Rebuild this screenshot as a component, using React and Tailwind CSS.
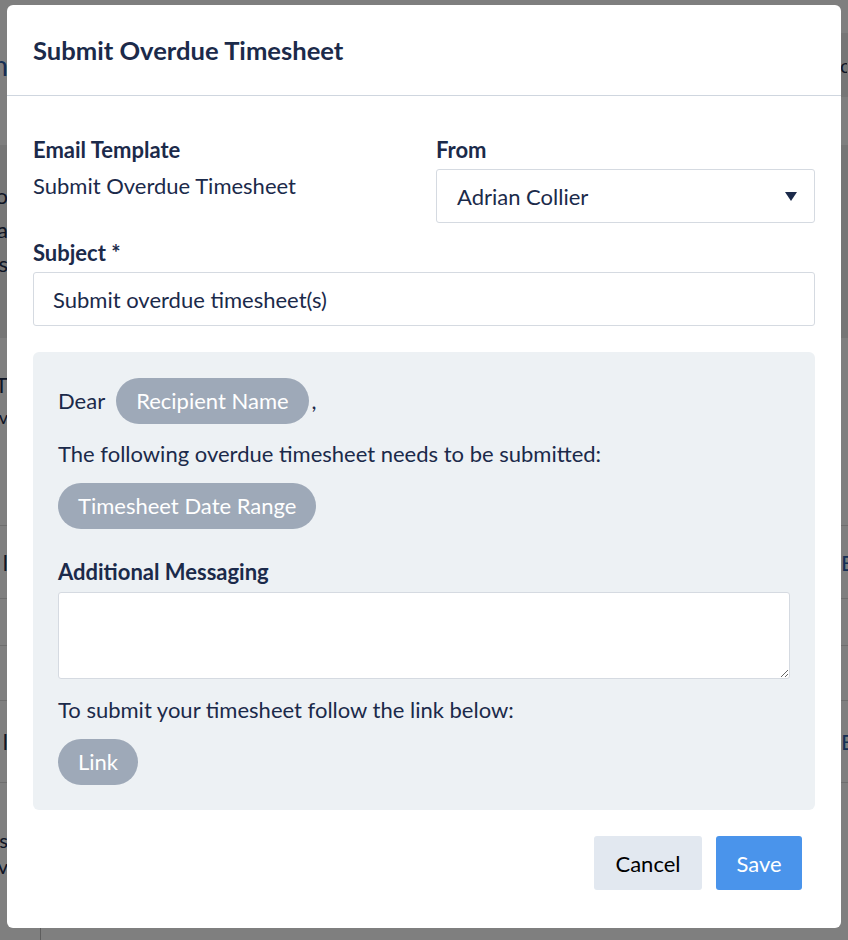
import React from 'react';

const navy = 'text-[#1b2a4a]';

const Pill = ({ children }) => (
  <span className="inline-flex h-[46px] items-center rounded-full bg-[#9ea9b8] px-5 text-[22px] text-white">
    {children}
  </span>
);

// strip of page text that peeks out at the left edge
const LeftPeek = ({ children, className = '' }) => (
  <div className={`flex w-[8px] justify-end overflow-hidden whitespace-nowrap ${className}`}>{children}</div>
);

const RightPeek = ({ children, className = '' }) => (
  <div className={`flex w-[7px] justify-start overflow-hidden whitespace-nowrap ${className}`}>{children}</div>
);

const Row = ({ h, left, right }) => (
  <div className={`flex items-center justify-between border-t border-[#dddddd] ${h}`}>
    <LeftPeek className="text-[22px]">{left}</LeftPeek>
    <RightPeek className="text-[22px] text-[#2b5ca8]">{right}</RightPeek>
  </div>
);

// the page behind the overlay, only its edges show
const Backdrop = () => (
  <div className="flex h-[940px] flex-col bg-white font-['Lato',sans-serif] text-[#1b2a4a]">
    <div className="flex h-[145px] justify-between">
      <LeftPeek className="pt-[44px] text-[28px] text-[#2b5ca8]">Tim</LeftPeek>
      <div className="mt-[33px] flex h-[64px] w-[8px] items-center bg-[#ececec] text-[20px]">
        <RightPeek>c</RightPeek>
      </div>
    </div>
    <div className="flex h-[193px] flex-col bg-[#ececec] pt-[34px] text-[22px] leading-[34px]">
      <LeftPeek>Do</LeftPeek>
      <LeftPeek>Da</LeftPeek>
      <LeftPeek>Us</LeftPeek>
    </div>
    <div className="flex h-[187px] flex-col pt-[30px] text-[22px] leading-[33px]">
      <LeftPeek>T</LeftPeek>
      <LeftPeek className="text-[18px]">ov</LeftPeek>
    </div>
    <Row h="h-[73px]" left="l" right="Edit" />
    <Row h="h-[47px]" left="" right="" />
    <Row h="h-[55px]" left="" right="" />
    <Row h="h-[82px]" left="l" right="Edit" />
    <div className="flex h-[146px] flex-col border-t border-[#dddddd] pt-[44px] text-[20px] leading-[26px]">
      <LeftPeek>es</LeftPeek>
      <LeftPeek>ov</LeftPeek>
    </div>
    <div className="ml-[40px] flex-1 border-l border-[#bbbbbb]" />
  </div>
);

export default function App() {
  return (
    <div className="relative h-[940px] w-full overflow-hidden">
      <Backdrop />
      <div className="absolute inset-0 flex justify-center bg-black/50 pt-[5px]">
        <div className={`flex h-[923px] w-[834px] flex-col rounded-[6px] bg-white font-['Lato',sans-serif] ${navy}`}>
          {/* header */}
          <div className="flex h-[91px] items-center border-b border-[#cfd6df] px-[26px]">
            <h2 className="text-[25.6px] font-bold">Submit Overdue Timesheet</h2>
          </div>

          {/* body */}
          <div className="flex flex-col px-[26px] pt-[42px] text-[22px]">
            <div className="grid grid-cols-2 gap-x-6">
              <div className="flex flex-col">
                <span className="leading-[24px] font-bold">Email Template</span>
                <span className="mt-[12px] leading-[24px]">Submit Overdue Timesheet</span>
              </div>
              <div className="flex flex-col">
                <span className="leading-[24px] font-bold">From</span>
                <div className="mt-[7px] flex h-[54px] items-center justify-between rounded-[3px] border border-[#d5dae1] pl-[20px] pr-[17px]">
                  <span>Adrian Collier</span>
                  <svg width="12" height="9" viewBox="0 0 12 9">
                    <path d="M0 0h12L6 9z" fill="#1b2a4a" />
                  </svg>
                </div>
              </div>
            </div>

            <span className="mt-[18px] leading-[24px] font-bold">Subject *</span>
            <div className="mt-[7px] flex h-[54px] items-center rounded-[3px] border border-[#d5dae1] pl-[19px]">
              Submit overdue timesheet(s)
            </div>

            {/* email preview */}
            <div className="mt-[26px] flex flex-col items-start rounded-[6px] bg-[#edf1f4] px-[25px] pb-[25px] pt-[26px] leading-[24px]">
              <div className="flex items-center">
                <span className="mr-[11px]">Dear</span>
                <Pill>Recipient Name</Pill>
                <span className="ml-[3px]">,</span>
              </div>
              <p className="mt-[18px]">The following overdue timesheet needs to be submitted:</p>
              <div className="mt-[17px]">
                <Pill>Timesheet Date Range</Pill>
              </div>
              <span className="mt-[31px] font-bold">Additional Messaging</span>
              <textarea className="mt-[8px] h-[87px] w-full rounded-[3px] border border-[#d5dae1] bg-white" />
              <p className="mt-[19px]">To submit your timesheet follow the link below:</p>
              <div className="mt-[17px]">
                <Pill>Link</Pill>
              </div>
            </div>

            <div className="mt-[26px] flex justify-end gap-[14px] pr-[13px]">
              <button className="h-[54px] w-[108px] rounded-[3px] bg-[#e2e8f0] text-black">Cancel</button>
              <button className="h-[54px] w-[86px] rounded-[3px] bg-[#4a94eb] text-white">Save</button>
            </div>
          </div>
        </div>
      </div>
    </div>
  );
}
